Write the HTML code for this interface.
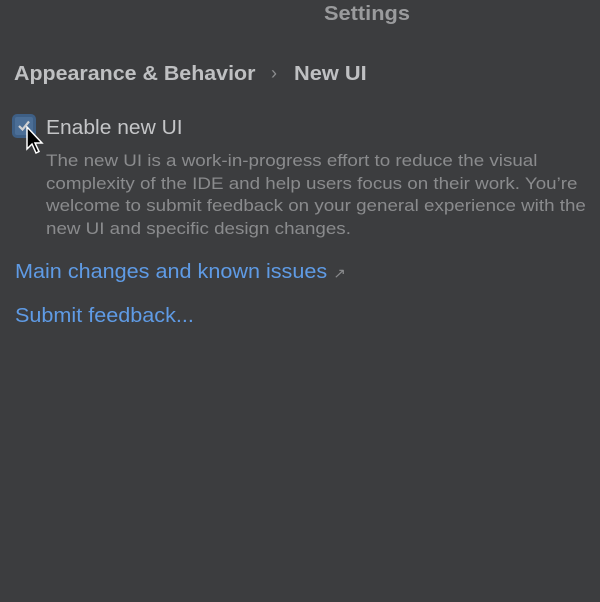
<!DOCTYPE html>
<html><head><style>
body{margin:0;width:600px;height:602px;background:#3c3d3f;font-family:"Liberation Sans",sans-serif;overflow:hidden;position:relative}
.t{position:absolute;white-space:nowrap;transform-origin:left top}
</style></head><body>
<div class="t" style="left:324px;top:3px;font-size:20px;font-weight:bold;color:#9a9b9d;transform:scaleX(1.09)">Settings</div>
<div class="t" style="left:14px;top:63px;font-size:20px;font-weight:bold;color:#bfc0c2;transform:scaleX(1.07)">Appearance &amp; Behavior</div>
<div class="t" style="left:271px;top:63px;font-size:18px;color:#8c8d8f">›</div>
<div class="t" style="left:294px;top:63px;font-size:20px;font-weight:bold;color:#bfc0c2;transform:scaleX(1.09)">New UI</div>
<div style="position:absolute;left:12px;top:114px;width:24px;height:24px;border:3px solid #3e5f85;border-radius:5px;box-sizing:border-box;background:#4b6e96"></div>
<svg style="position:absolute;left:16px;top:118px" width="16" height="16"><path d="M3 8 L6.5 11.5 L13 3.5" stroke="#cfd0d2" stroke-width="2.2" fill="none"/></svg>
<svg style="position:absolute;left:25px;top:126px" width="22" height="32"><path d="M2 1 L2 23 L7 18 L11 27 L14 25.5 L10 17 L17 17 Z" fill="#000" stroke="#fff" stroke-width="1.5"/></svg>
<div class="t" style="left:46px;top:117px;font-size:20px;color:#c4c5c7;transform:scaleX(1.05)">Enable new UI</div>
<div class="t" style="left:46px;top:150px;font-size:17px;line-height:22.5px;color:#8a8b8d;transform:scaleX(1.105)">The new UI is a work-in-progress effort to reduce the visual<br>complexity of the IDE and help users focus on their work. You’re<br>welcome to submit feedback on your general experience with the<br>new UI and specific design changes.</div>
<div class="t" style="left:15px;top:261px;font-size:20px;color:#5f9be5;transform:scaleX(1.08)">Main changes and known issues <span style="font-size:14px;color:#8a8b8d">↗</span></div>
<div class="t" style="left:15px;top:305px;font-size:20px;color:#5f9be5;transform:scaleX(1.08)">Submit feedback...</div>
</body></html>
